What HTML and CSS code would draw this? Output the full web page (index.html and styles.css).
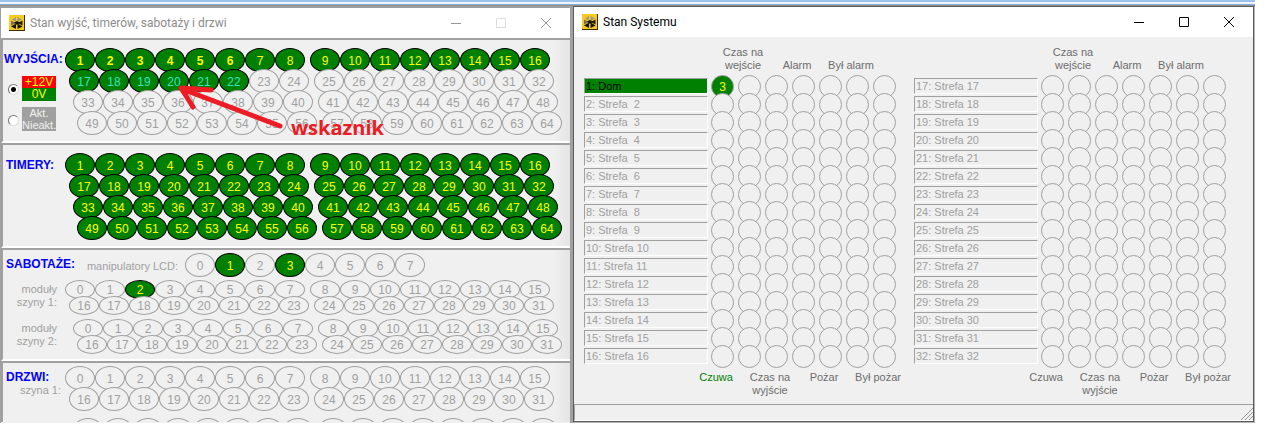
FILE: index.html
```html
<!DOCTYPE html>
<html lang="pl">
<head>
<meta charset="utf-8">
<title>Stan Systemu</title>
<link rel="stylesheet" href="styles.css">
</head>
<body>
<svg class="defs" aria-hidden="true">
  <symbol id="app-icon" viewBox="0 0 16 16">
    <rect width="16" height="16" fill="#3a2c00"/>
    <rect width="15" height="15" fill="#f6ca20"/>
    <path d="M7 2v4.500L3 4.500zM8.500 2v4.500l4.500-2z" fill="#9c998a"/>
    <path d="M2 5.500L7 8l-5 2.500z" fill="#77705a"/>
    <path d="M13.500 5.500L8.500 8l5 2.500z" fill="#25210f"/>
    <path d="M2 11.500l5-3V14zM13.500 11.500l-5-3V14z" fill="#16140c"/>
    <path d="M5 7.500l3-1.500 3 1.500-3 2.500z" fill="#16140c"/>
  </symbol>
</svg>
<main class="desktop">
  <section class="window outputs">
    <header class="titlebar inactive">
      <svg class="app"><use href="#app-icon"/></svg>
      <h1>Stan wyjść, timerów, sabotaży i drzwi</h1>
      <button aria-label="Minimalizuj"><svg viewBox="0 0 12 12"><path d="M1 6.500h10"/></svg></button>
      <button class="off" aria-label="Maksymalizuj" disabled><svg viewBox="0 0 12 12"><path d="M1.500 1.500h9v9h-9z"/></svg></button>
      <button aria-label="Zamknij"><svg viewBox="0 0 12 12"><path d="M1 1l10 10M11 1L1 11"/></svg></button>
    </header>

    <section class="group">
      <div class="side">
        <h2 class="wide">WYJŚCIA:</h2>
        <label class="mode"><input type="radio" name="mode" checked><span class="key"><span class="on">+12V</span><span class="zero">0V</span></span></label>
        <label class="mode"><input type="radio" name="mode"><span class="key dim"><span>Akt.</span><span>Nieakt.</span></span></label>
      </div>
      <div class="bank" data-rows="4" data-first="1" data-lit="22" data-bold="6" data-cyan="17"></div>
      <div class="note">
        <svg viewBox="0 0 110 50"><path d="M107 42L9 5M38 6L8 4l12 19"/></svg>
        <span>wskaznik</span>
      </div>
    </section>

    <section class="group">
      <div class="side"><h2>TIMERY:</h2></div>
      <div class="bank" data-rows="4" data-first="1" data-lit="64"></div>
    </section>

    <section class="group tight">
      <div class="stack">
        <div class="line">
          <h2>SABOTAŻE:</h2><span class="lcd">manipulatory LCD:</span>
          <div class="bank" data-rows="1" data-count="8" data-first="0" data-only="1 3"></div>
        </div>
        <div class="line modules">
          <p class="side bus">moduły<br>szyny 1:</p>
          <div class="bank flat" data-rows="2" data-first="0" data-only="2"></div>
        </div>
        <div class="line modules second">
          <p class="side bus">moduły<br>szyny 2:</p>
          <div class="bank flat" data-rows="2" data-first="0" data-shift="2"></div>
        </div>
      </div>
    </section>

    <section class="group tight last">
      <div class="side"><h2>DRZWI:</h2><p class="door">szyna 1:</p></div>
      <div>
        <div class="bank" data-rows="2" data-first="0"></div>
        <div class="cut"><div class="bank" data-rows="1" data-blank="yes" data-shift="2"></div></div>
      </div>
    </section>
  </section>

  <section class="window system">
    <header class="titlebar">
      <svg class="app"><use href="#app-icon"/></svg>
      <h1>Stan Systemu</h1>
      <button aria-label="Minimalizuj"><svg viewBox="0 0 12 12"><path d="M1 6.500h10"/></svg></button>
      <button aria-label="Maksymalizuj"><svg viewBox="0 0 12 12"><path d="M1.500 1.500h9v9h-9z"/></svg></button>
      <button aria-label="Zamknij"><svg viewBox="0 0 12 12"><path d="M1 1l10 10M11 1L1 11"/></svg></button>
    </header>
    <div class="zones">
      <div class="half">
        <div class="heads"><span>Czas na wejście</span><span>Alarm</span><span class="nowrap">Był alarm</span></div>
        <div class="list" data-start="1"></div>
        <div class="feet"><span class="armed">Czuwa</span><span>Czas na wyjście</span><span>Pożar</span><span class="nowrap">Był pożar</span></div>
      </div>
      <div class="half">
        <div class="heads"><span>Czas na wejście</span><span>Alarm</span><span class="nowrap">Był alarm</span></div>
        <div class="list" data-start="17"></div>
        <div class="feet"><span>Czuwa</span><span>Czas na wyjście</span><span>Pożar</span><span class="nowrap">Był pożar</span></div>
      </div>
    </div>
    <footer class="status"><svg viewBox="0 0 12 12"><path d="M0 12L12 0M4 12l8-8M8 12l4-4"/></svg></footer>
  </section>
</main>
<script src="script.js"></script>
</body>
</html>
```
FILE: styles.css
```css
* { box-sizing: border-box; }
body { margin: 0; background: #fff; font: 11px/13px "Liberation Sans", Arial, sans-serif; color: #a0a0a0; }
h1, h2, p { margin: 0; }
.defs { position: absolute; width: 0; height: 0; }

.desktop {
  display: grid;
  grid-template-columns: 573px 1fr;
  margin-right: 24px;
  padding: 6px 1px 1px 0;
  background: linear-gradient(#9cc3ec 0 2px, #f0f5fb 2px 4px, #86aedb 4px 5px, #8f8f8f 5px 7px, #b4b4b4 7px);
}
.window { background: #f0f0f0; }
.outputs { border: solid #a0a0a0; border-width: 2px 3px 0 1px; margin-bottom: -1px; }
.system { border: 1px solid #5c5c5c; display: flex; flex-direction: column; }

.titlebar { display: flex; align-items: center; height: 30px; padding: 0 2px 0 8px; background: #fff; color: #000; }
.titlebar h1 { flex: 1; margin-left: 5px; font: 12px/16px Roboto, "Noto Sans", sans-serif; white-space: nowrap; }
.titlebar .app { width: 16px; height: 16px; }
.titlebar button { width: 45px; height: 28px; padding: 0; border: 0; background: none; color: inherit; }
.titlebar button svg { display: block; width: 12px; height: 12px; margin: 0 auto; fill: none; stroke: currentColor; }
.inactive { color: #999; }
.inactive h1 { color: #8c8c8c; }
.inactive .off { color: #ddd; }

.group {
  position: relative;
  display: flex;
  padding: 8px 0 6px;
  border: solid #a0a0a0;
  border-width: 2px 0 2px 2px;
  border-bottom-color: #fff;
  background: linear-gradient(to left, #e4e4e4, #f0f0f0 16px);
}
.tight { padding: 3px 0 5px; }
.last { padding-bottom: 0; border-bottom: 0; }
.side { width: 62px; flex: none; }
h2 { margin: 5px 0 0 3px; font-size: 12px; line-height: 14px; color: #00f; white-space: nowrap; }
.tight h2 { margin-top: 4px; }
h2.wide { margin-left: 1px; margin-top: 4px; }

.mode { display: flex; align-items: center; margin-top: 10px; padding-left: 5px; }
.mode + .mode { margin-top: 6px; }
.mode input {
  appearance: none; width: 11px; height: 11px; margin: 2px 3px 0 0;
  border: 1px solid; border-color: #777 #ddd #ddd #777; border-radius: 50%; background: #fff;
}
.mode input:checked { background: radial-gradient(#000 0 2px, #fff 3px); }
.key { width: 34px; font-size: 12px; line-height: 12px; text-align: center; color: #ff0; }
.key span { display: block; }
.on { background: #f00; }
.zero { background: #008000; line-height: 13px; }
.dim { background: #a0a0a0; color: #f0f0f0; font-size: 11px; }

.row { display: flex; width: max-content; }
.row + .row { margin-top: -3px; }
.s1 { padding-left: 4px; }
.s2 { padding-left: 8px; }
.s3 { padding-left: 12px; }
.lamp {
  width: 30px; height: 24px; border: 1px solid #a0a0a0; border-radius: 50%;
  background: #f0f0f0; font-size: 12px; line-height: 24px; text-align: center;
}
.lamp.gap { margin-left: 5px; }
.flat .lamp { height: 19px; line-height: 18px; }
.lamp.lit { background: #008000; border-color: #000; color: #ff0; }
.lamp.cyan { color: #2fe6c8; }
.bold { font-weight: bold; }

.stack { flex: 1; }
.line { display: flex; }
.lcd { width: 107px; padding: 7px 7px 0 0; text-align: right; white-space: nowrap; }
.line > h2 { width: 72px; }
.modules { margin-top: 3px; }
.modules.second { margin-top: 4px; }
.bus { padding: 3px 8px 0 0; text-align: right; }
.door { padding-right: 4px; text-align: right; }
.cut { height: 4px; margin-top: 7px; overflow: hidden; }

.note {
  position: absolute; left: 170px; top: 44px; display: flex; color: #ed1c24;
  font: bold 20px/24px "Open Sans", sans-serif;
}
.note svg { width: 110px; height: 50px; fill: none; stroke: #ed1c24; stroke-width: 5; stroke-linecap: round; stroke-linejoin: round; }
.note span { margin: 32px 0 0 8px; }

.zones { display: flex; gap: 9px; padding: 9px 18px 7px 10px; color: #6d6d6d; }
.half { flex: 1; }
.heads, .feet { display: flex; justify-content: flex-end; align-items: flex-end; text-align: center; }
.heads { padding: 0 27px 3px 0; }
.feet { align-items: flex-start; padding-top: 3px; }
.heads span, .feet span { width: 54px; }
.nowrap { white-space: nowrap; }
.feet .armed { color: #008000; }
.zone { display: flex; height: 18px; color: #a0a0a0; }
.list { padding-bottom: 5px; }
.name {
  flex: 1; height: 16px; margin: 3px 3px 0 0; padding-left: 1px; line-height: 14px; white-space: pre;
  border: 1px solid; border-color: #a0a0a0 #fff #fff #a0a0a0;
}
.name.active { background: #008000; color: #000; }
.dots { display: flex; gap: 4px; margin-right: 9px; }
.dot { width: 23px; height: 23px; border: 1px solid #a0a0a0; border-radius: 50%; background: #f0f0f0; line-height: 22px; text-align: center; font-size: 12px; }
.dot.armed { background: #008000; color: #ff0; }

.status { height: 17px; margin-top: auto; border: 1px solid #a0a0a0; border-right: 0; border-bottom-color: #fff; display: flex; justify-content: flex-end; align-items: flex-end; }
.status svg { width: 12px; height: 12px; stroke: #999; fill: none; }
```
FILE: script.js
```js
function add(parent, className, text) {
  const el = document.createElement('div');
  el.className = className;
  if (text !== undefined) el.textContent = text;
  parent.appendChild(el);
  return el;
}

document.querySelectorAll('.bank').forEach(function (bank) {
  const d = bank.dataset;
  const count = Number(d.count || 16);
  const only = (d.only || '').split(' ');
  let n = Number(d.first || 0);
  for (let r = 0; r < Number(d.rows); r++) {
    const row = add(bank, 'row s' + (r + Number(d.shift || 0)));
    for (let i = 0; i < count; i++, n++) {
      let c = 'lamp';
      const lit = (d.lit && n <= Number(d.lit)) || only.includes(String(n));
      if (i === 8) c += ' gap';
      if (lit) c += ' lit';
      if (lit && d.cyan && n >= Number(d.cyan)) c += ' cyan';
      if (d.bold && n <= Number(d.bold)) c += ' bold';
      add(row, c, d.blank ? '' : n);
    }
  }
});

document.querySelectorAll('.list').forEach(function (list) {
  const start = Number(list.dataset.start);
  for (let n = start; n < start + 16; n++) {
    const zone = add(list, 'zone');
    const label = n === 1 ? '1: Dom' : n + ': Strefa ' + (n < 10 ? ' ' : '') + n;
    add(zone, n === 1 ? 'name active' : 'name', label);
    const dots = add(zone, 'dots');
    for (let i = 0; i < 7; i++) {
      const armed = n === 1 && i === 0;
      add(dots, armed ? 'dot armed' : 'dot', armed ? '3' : '');
    }
  }
});
```
